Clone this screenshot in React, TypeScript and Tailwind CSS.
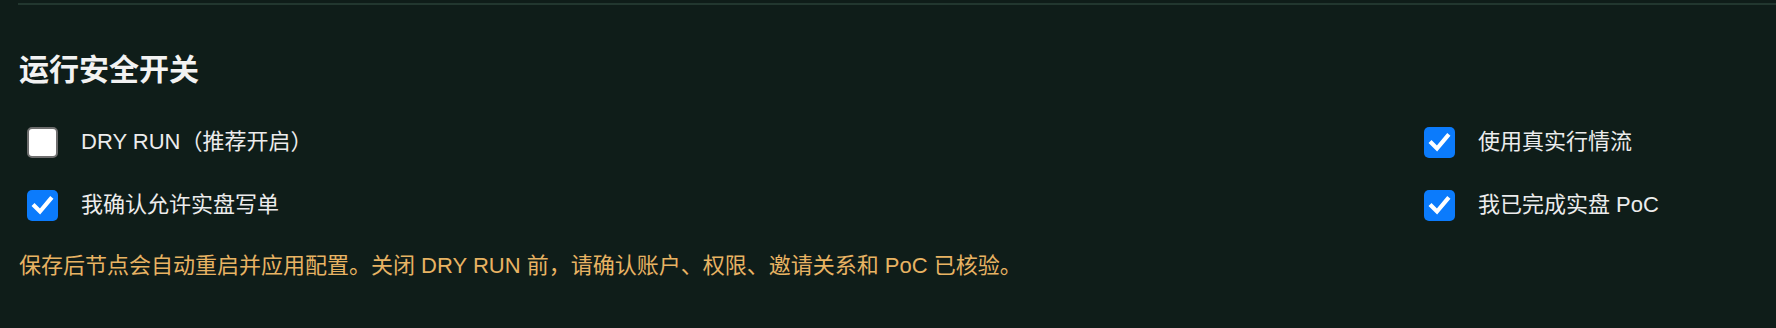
import React from "react";

const FONT = '"Liberation Sans", "Noto Sans CJK SC", sans-serif';

function Box({ checked }: { checked: boolean }) {
  if (!checked) {
    return (
      <span className="block w-[31px] h-[31px] shrink-0 rounded-[5px] border-2 border-[#6e6e6e] bg-white" />
    );
  }
  return (
    <span className="flex w-[31px] h-[31px] shrink-0 items-center justify-center rounded-[5px] bg-[#0b7bfc]">
      <svg width="31" height="31" viewBox="0 0 31 31">
        <path d="M7.5 16 L13 21.5 L23.5 9" fill="none" stroke="#ffffff" strokeWidth="4.2" strokeLinecap="square" strokeLinejoin="miter" />
      </svg>
    </span>
  );
}

function Row({ checked, label }: { checked: boolean; label: string }) {
  return (
    <label className="flex h-[32px] items-center gap-[23px]">
      <Box checked={checked} />
      <span className="text-[22px] leading-[32px] text-[#ececec]">{label}</span>
    </label>
  );
}

export default function App() {
  return (
    <div
      className="w-[1776px] h-[328px] overflow-hidden bg-[#0f1d19] pl-[18px] pt-[3px]"
      style={{ fontFamily: FONT }}
    >
      <div className="h-[2px] bg-[#22372f]" />
      <h2 className="mt-[47px] ml-[1px] text-[30px] leading-[36px] font-bold text-[#f2f2f2]">
        运行安全开关
      </h2>
      <div className="mt-[38px] flex">
        <div className="flex flex-1 flex-col gap-[31px] pl-[9px]">
          <Row checked={false} label="DRY RUN（推荐开启）" />
          <Row checked={true} label="我确认允许实盘写单" />
        </div>
        <div className="flex w-[352px] flex-col gap-[31px]">
          <Row checked={true} label="使用真实行情流" />
          <Row checked={true} label="我已完成实盘 PoC" />
        </div>
      </div>
      <p className="mt-[30px] ml-[1px] text-[22px] leading-[30px] text-[#e8b363]">
        保存后节点会自动重启并应用配置。关闭 DRY RUN 前，请确认账户、权限、邀请关系和 PoC 已核验。
      </p>
    </div>
  );
}
